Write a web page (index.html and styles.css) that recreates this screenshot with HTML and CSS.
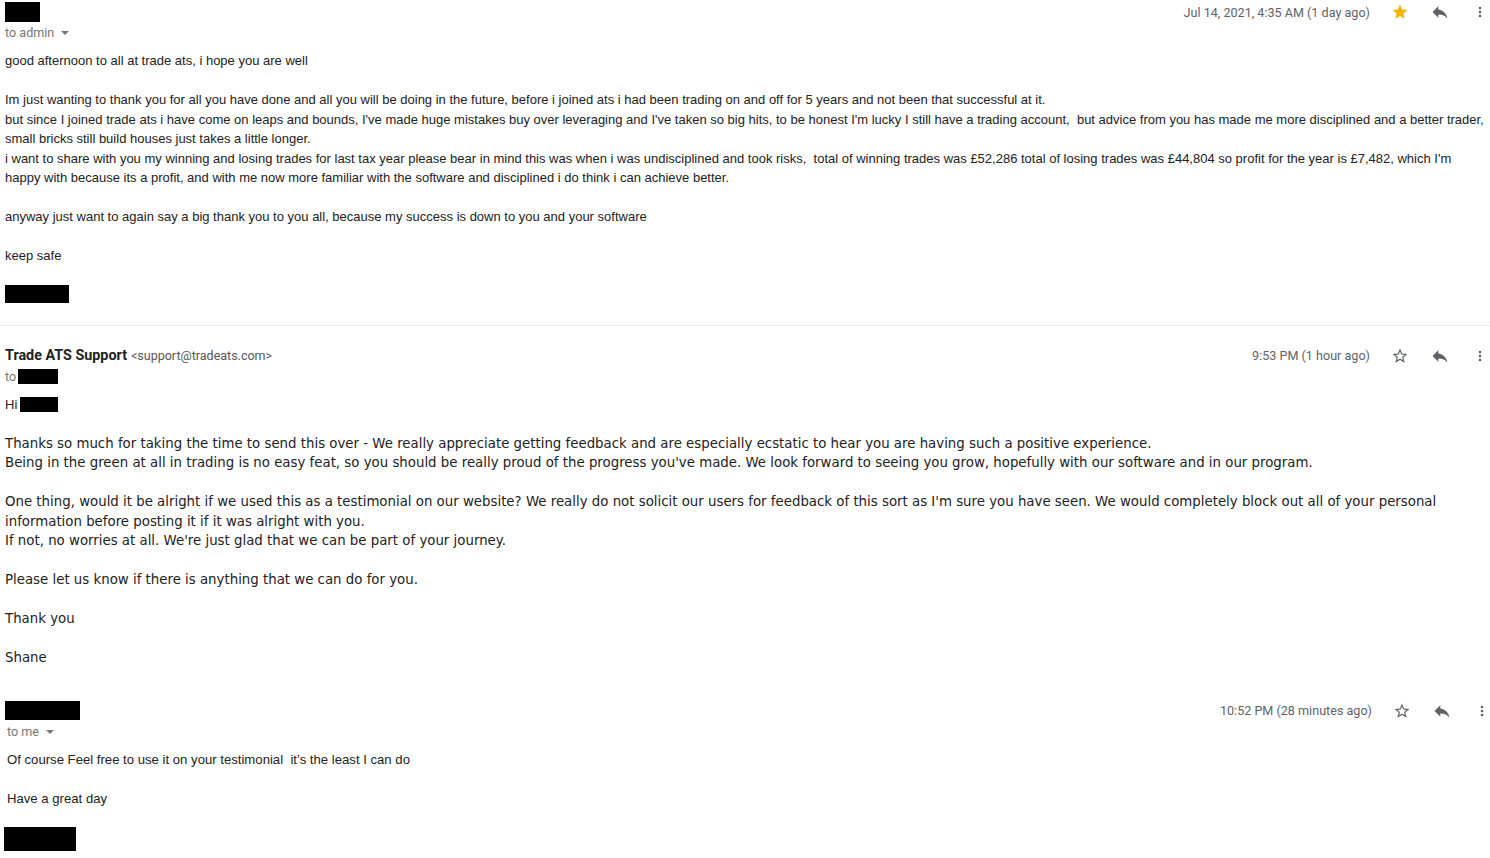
FILE: index.html
```html
<!DOCTYPE html>
<html>
<head>
<meta charset="utf-8">
<link rel="stylesheet" href="styles.css">
</head>
<body>
<div class="thread">

  <div class="msg msg1">
    <div class="head">
      <div class="who"><span class="redact r-name1"></span></div>
      <div class="acts">
        <span class="date">Jul 14, 2021, 4:35 AM (1 day ago)</span>
        <span class="ico star"><svg viewBox="0 0 24 24" width="18" height="18"><path fill="#f4b400" d="M12 17.27L18.18 21l-1.64-7.03L22 9.24l-7.19-.61L12 2 9.19 8.63 2 9.24l5.46 4.73L5.82 21z"/></svg></span>
        <span class="ico reply"><svg viewBox="0 0 24 24" width="20" height="20"><path fill="#5f6368" d="M10 9V5l-7 7 7 7v-4.1c5 0 8.5 1.6 11 5.1-1-5-4-10-11-11z"/></svg></span>
        <span class="ico more"><svg viewBox="0 0 24 24" width="20" height="20"><path fill="#5f6368" d="M12 8c1.1 0 2-.9 2-2s-.9-2-2-2-2 .9-2 2 .9 2 2 2zm0 2c-1.1 0-2 .9-2 2s.9 2 2 2 2-.9 2-2-.9-2-2-2zm0 6c-1.1 0-2 .9-2 2s.9 2 2 2 2-.9 2-2-.9-2-2-2z"/></svg></span>
      </div>
    </div>
    <div class="to">to admin <span class="caret"></span></div>
    <div class="body body-a">
      <div>good afternoon to all at trade ats, i hope you are well</div>
      <div class="blank"></div>
      <div>Im just wanting to thank you for all you have done and all you will be doing in the future, before i joined ats i had been trading on and off for 5 years and not been that successful at it.</div>
      <div>but since I joined trade ats i have come on leaps and bounds, I've made huge mistakes buy over leveraging and I've taken so big hits, to be honest I'm lucky I still have a trading account,&nbsp; but advice from you has made me more disciplined and a better trader,<br>small bricks still build houses just takes a little longer.</div>
      <div>i want to share with you my winning and losing trades for last tax year please bear in mind this was when i was undisciplined and took risks,&nbsp; total of winning trades was £52,286 total of losing trades was £44,804 so profit for the year is £7,482, which I'm<br>happy with because its a profit, and with me now more familiar with the software and disciplined i do think i can achieve better.</div>
      <div class="blank"></div>
      <div>anyway just want to again say a big thank you to you all, because my success is down to you and your software</div>
      <div class="blank"></div>
      <div>keep safe</div>
      <div class="blank"></div>
      <div class="sigline"><span class="redact r-sig1"></span></div>
    </div>
  </div>

  <div class="msg msg2">
    <div class="head">
      <div class="who"><span class="name">Trade ATS Support</span> <span class="addr">&lt;support@tradeats.com&gt;</span></div>
      <div class="acts">
        <span class="date">9:53 PM (1 hour ago)</span>
        <span class="ico star"><svg viewBox="0 0 24 24" width="18" height="18"><path fill="#5f6368" d="M22 9.24l-7.19-.62L12 2 9.19 8.63 2 9.24l5.46 4.73L5.82 21 12 17.27 18.18 21l-1.63-7.03L22 9.24zM12 15.4l-3.76 2.27 1-4.28-3.32-2.88 4.38-.38L12 6.1l1.71 4.04 4.38.38-3.32 2.88 1 4.28L12 15.4z"/></svg></span>
        <span class="ico reply"><svg viewBox="0 0 24 24" width="20" height="20"><path fill="#5f6368" d="M10 9V5l-7 7 7 7v-4.1c5 0 8.5 1.6 11 5.1-1-5-4-10-11-11z"/></svg></span>
        <span class="ico more"><svg viewBox="0 0 24 24" width="20" height="20"><path fill="#5f6368" d="M12 8c1.1 0 2-.9 2-2s-.9-2-2-2-2 .9-2 2 .9 2 2 2zm0 2c-1.1 0-2 .9-2 2s.9 2 2 2 2-.9 2-2-.9-2-2-2zm0 6c-1.1 0-2 .9-2 2s.9 2 2 2 2-.9 2-2-.9-2-2-2z"/></svg></span>
      </div>
    </div>
    <div class="to to2">to <span class="redact r-to2"></span></div>
    <div class="body body-b">
      <div class="hi">Hi <span class="redact r-hi"></span></div>
      <div class="blank"></div>
      <div class="verd">Thanks so much for taking the time to send this over - We really appreciate getting feedback and are especially ecstatic to hear you are having such a positive experience.</div>
      <div class="verd">Being in the green at all in trading is no easy feat, so you should be really proud of the progress you've made. We look forward to seeing you grow, hopefully with our software and in our program.</div>
      <div class="blank"></div>
      <div class="verd">One thing, would it be alright if we used this as a testimonial on our website? We really do not solicit our users for feedback of this sort as I'm sure you have seen. We would completely block out all of your personal<br>information before posting it if it was alright with you.</div>
      <div class="verd">If not, no worries at all. We're just glad that we can be part of your journey.</div>
      <div class="blank"></div>
      <div class="verd">Please let us know if there is anything that we can do for you.</div>
      <div class="blank"></div>
      <div class="verd">Thank you</div>
      <div class="blank"></div>
      <div class="verd">Shane</div>
    </div>
  </div>

  <div class="msg msg3">
    <div class="head">
      <div class="who"><span class="redact r-name3"></span></div>
      <div class="acts">
        <span class="date">10:52 PM (28 minutes ago)</span>
        <span class="ico star"><svg viewBox="0 0 24 24" width="18" height="18"><path fill="#5f6368" d="M22 9.24l-7.19-.62L12 2 9.19 8.63 2 9.24l5.46 4.73L5.82 21 12 17.27 18.18 21l-1.63-7.03L22 9.24zM12 15.4l-3.76 2.27 1-4.28-3.32-2.88 4.38-.38L12 6.1l1.71 4.04 4.38.38-3.32 2.88 1 4.28L12 15.4z"/></svg></span>
        <span class="ico reply"><svg viewBox="0 0 24 24" width="20" height="20"><path fill="#5f6368" d="M10 9V5l-7 7 7 7v-4.1c5 0 8.5 1.6 11 5.1-1-5-4-10-11-11z"/></svg></span>
        <span class="ico more"><svg viewBox="0 0 24 24" width="20" height="20"><path fill="#5f6368" d="M12 8c1.1 0 2-.9 2-2s-.9-2-2-2-2 .9-2 2 .9 2 2 2zm0 2c-1.1 0-2 .9-2 2s.9 2 2 2 2-.9 2-2-.9-2-2-2zm0 6c-1.1 0-2 .9-2 2s.9 2 2 2 2-.9 2-2-.9-2-2-2z"/></svg></span>
      </div>
    </div>
    <div class="to to3">to me <span class="caret"></span></div>
    <div class="body body-c">
      <div>Of course Feel free to use it on your testimonial&nbsp; it’s the least I can do</div>
      <div class="blank"></div>
      <div>Have a great day</div>
    </div>
    <div class="sig3"><span class="redact r-sig3"></span></div>
  </div>

</div>
</body>
</html>
```

FILE: styles.css
```css
html, body {
  margin: 0;
  padding: 0;
  background: #fff;
  overflow: hidden;
}
body {
  width: 1490px;
  height: 858px;
  font-family: Roboto, "Liberation Sans", Arial, sans-serif;
  color: #222;
}
.thread {
  display: flex;
  flex-direction: column;
}
.msg {
  display: flex;
  flex-direction: column;
  padding-left: 5px;
}
.head {
  display: flex;
  justify-content: space-between;
  align-items: center;
  height: 24px;
}
.who {
  display: flex;
  align-items: center;
  gap: 4px;
}
.redact {
  display: inline-block;
  background: #000;
}
.r-name1 { width: 35px; height: 20px; }
.r-sig1 { width: 64px; height: 18px; }
.r-to2 { width: 40px; height: 15px; }
.r-hi { width: 38px; height: 15px; }
.r-name3 { width: 75px; height: 19px; }
.r-sig3 { width: 72px; height: 24px; }

.acts {
  display: flex;
  align-items: center;
  padding-right: 2px;
}
.date {
  font-size: 12.6px;
  color: #5f6368;
  margin-right: 20px;
}
.ico {
  display: flex;
  align-items: center;
  justify-content: center;
}
.star { width: 20px; }
.reply { width: 20px; margin-left: 20px; }
.more { width: 16px; margin-left: 22px; }

.to {
  font-size: 12.6px;
  line-height: 18px;
  color: #777;
  display: flex;
  align-items: center;
  gap: 3px;
}
.caret {
  display: inline-block;
  width: 0;
  height: 0;
  border-left: 4px solid transparent;
  border-right: 4px solid transparent;
  border-top: 4px solid #777;
  margin-left: 4px;
}
.body {
  font-size: 13px;
  line-height: 19.5px;
  white-space: nowrap;
}
.body-a {
  font-family: "Liberation Sans", Arial, sans-serif;
  margin-top: 9px;
}
.blank { height: 19.5px; }
.sigline {
  display: flex;
  align-items: center;
  height: 19.5px;
  margin-top: -1px;
}
.msg1 {
  padding-bottom: 21px;
  border-bottom: 1px solid #ebebeb;
}
.msg2 {
  padding-top: 18px;
}
.name {
  font-size: 14.35px;
  font-weight: bold;
  color: #222;
}
.addr {
  font-size: 12.5px;
  color: #555;
}
.to2 { gap: 2px; }
.hi {
  font-family: "Liberation Sans", Arial, sans-serif;
  font-size: 13px;
  display: flex;
  align-items: center;
  gap: 3px;
  height: 19.5px;
  margin-top: 9px;
}
.verd {
  font-family: "DejaVu Sans", Verdana, sans-serif;
  font-size: 13.33px;
}
.msg3 {
  padding-top: 31px;
}
.msg3 .acts { padding-right: 0; }
.to3 { padding-left: 2px; }
.body-c {
  font-family: "Liberation Sans", Arial, sans-serif;
  font-size: 13.15px;
  padding-left: 2px;
  margin-top: 9px;
}
.sig3 {
  margin-top: 19px;
  margin-left: -1px;
  display: flex;
}
```
